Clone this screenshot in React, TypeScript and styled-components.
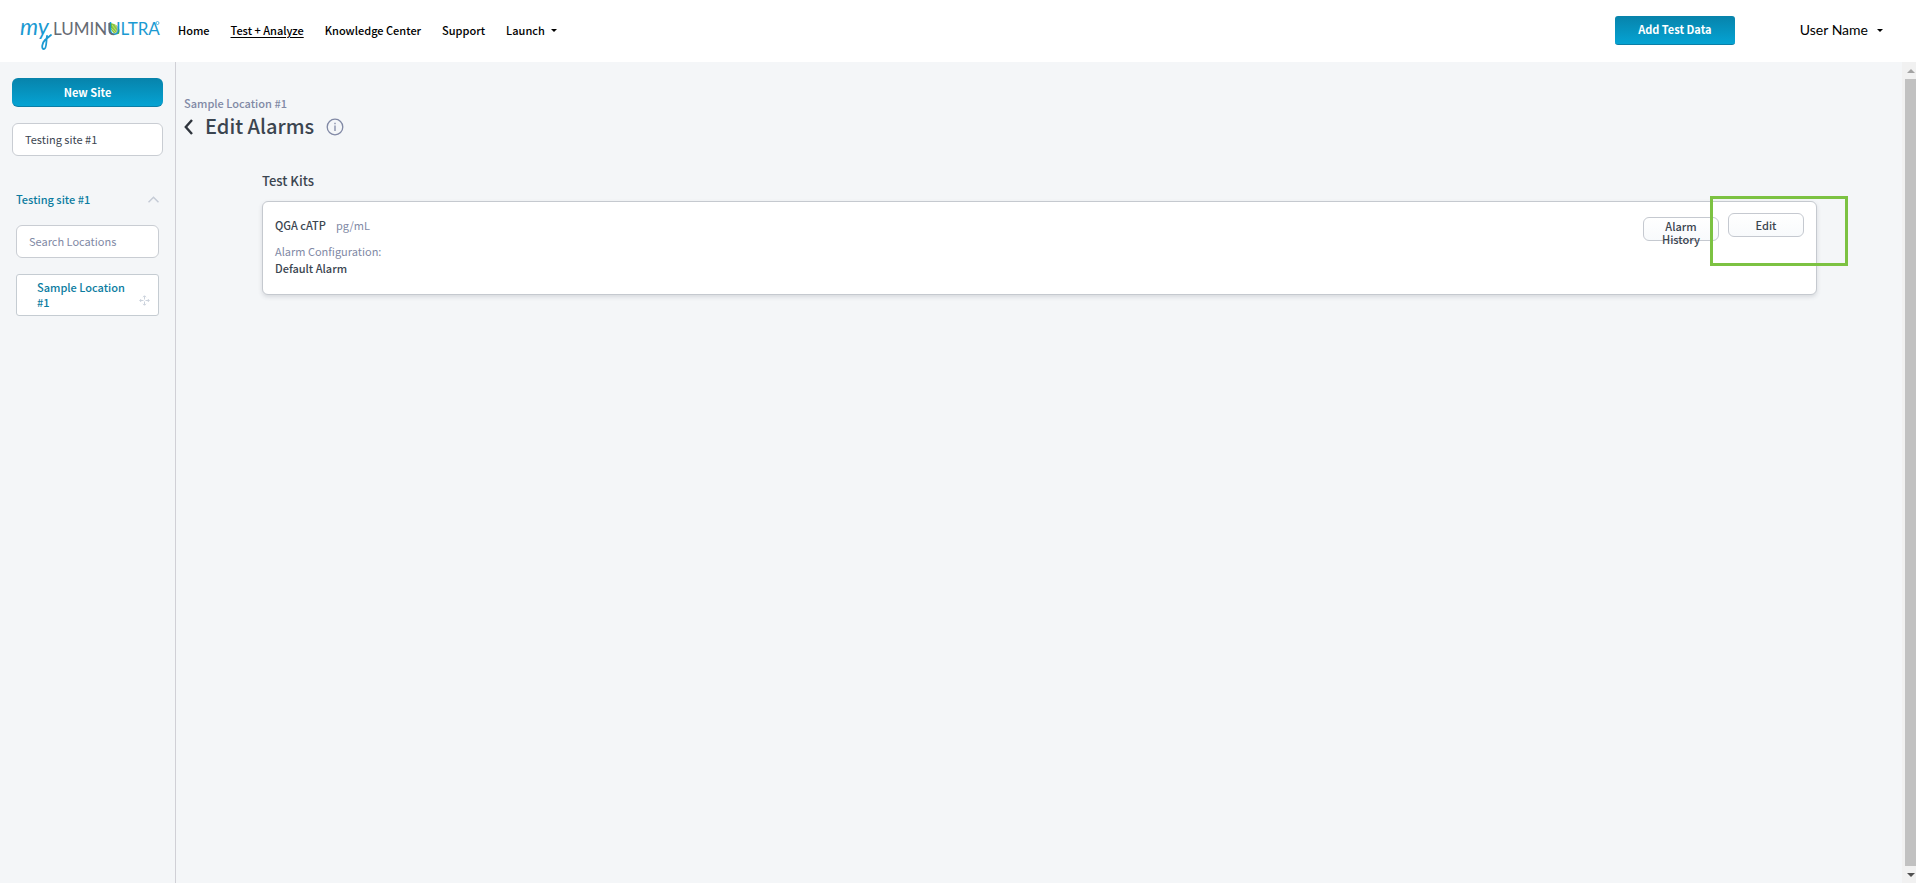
import React from "react";
import styled, { createGlobalStyle, css } from "styled-components";

const GlobalStyle = createGlobalStyle`
  *, *::before, *::after { box-sizing: border-box; }
  body {
    margin: 0;
    background: #f4f6f8;
    color: #3b4550;
    font-family: "Noto Sans CJK SC", "Noto Sans", sans-serif;
    font-size: 11px;
    font-weight: 500;
    line-height: 16px;
  }
  button, input, select { font: inherit; color: inherit; }
  button { cursor: pointer; }
`;

const Page = styled.div`
  min-height: 100vh;
  display: flex;
  flex-direction: column;
`;

const TopBar = styled.header`
  height: 62px;
  padding: 0 33px 0 18px;
  display: flex;
  align-items: center;
  background: #fff;
`;

const Logo = styled.svg`
  display: block;
  flex: none;
`;

const Nav = styled.nav`
  margin-left: 17px;
  padding-bottom: 2px;
  display: flex;
  gap: 21px;
`;

const NavLink = styled.a<{ $active?: boolean }>`
  color: #000;
  text-decoration: ${(p) => (p.$active ? "underline" : "none")};
  text-underline-offset: 2px;
`;

const MenuButton = styled.button<{ $large?: boolean }>`
  display: flex;
  align-items: center;
  gap: ${(p) => (p.$large ? 9 : 6)}px;
  padding: 0;
  border: 0;
  background: none;
  color: #000;
  ${(p) =>
    p.$large &&
    css`
      font: 400 14px/16px Lato, sans-serif;
    `}
`;

const Caret = styled.span`
  border: 3px solid transparent;
  border-top-color: currentColor;
  border-bottom: 0;
`;

const Account = styled.div`
  margin-left: auto;
  padding-bottom: 2px;
  display: flex;
  align-items: center;
  gap: 65px;
`;

const PrimaryButton = styled.button<{ $wide?: boolean }>`
  width: ${(p) => (p.$wide ? "100%" : "120px")};
  height: 29px;
  padding: 0 0 ${(p) => (p.$wide ? 0 : 2)}px;
  border: 0;
  border-bottom: 1px solid #0b7ea6;
  border-radius: ${(p) => (p.$wide ? 6 : 3)}px;
  background: linear-gradient(#0783ab, #05a3d3);
  color: #fff;
  font-weight: 700;
`;

const Body = styled.div`
  flex: 1;
  display: flex;
`;

const Sidebar = styled.aside`
  width: 176px;
  flex: none;
  padding: 16px 12px;
  border-right: 1px solid #d0d0d6;
`;

const Field = styled.input`
  display: block;
  width: 100%;
  height: 33px;
  padding: 0 12px 1px;
  border: 1px solid #c9cdd3;
  border-radius: 6px;
  background: #fff;
  font-weight: 400;
  &::placeholder { color: #8189a5; opacity: 1; }
`;

const SiteField = styled(Field)`
  margin-top: 16px;
`;

const SiteGroup = styled.section`
  margin-top: 34px;
  padding: 0 4px;
  display: grid;
  gap: 16px;
`;

const SiteToggle = styled.button`
  display: flex;
  align-items: center;
  justify-content: space-between;
  padding: 0 0 1px;
  border: 0;
  background: none;
  color: #0c7c9f;
  line-height: 18px;
`;

const LocationCard = styled.a`
  display: flex;
  align-items: flex-end;
  justify-content: space-between;
  padding: 5px 8px 5px 20px;
  border: 1px solid #c5ccd2;
  border-radius: 3px;
  background: #fff;
  color: #0c7c9f;
  line-height: 15px;
  text-decoration: none;
`;

const LocationName = styled.span`
  width: 92px;
`;

const Main = styled.main`
  flex: 1;
  min-width: 0;
  padding: 33px 85px 34px 8px;
`;

const Crumb = styled.div`
  margin-bottom: 1px;
  color: #8189a5;
`;

const TitleRow = styled.div`
  display: flex;
  align-items: center;
  height: 28px;
`;

const IconButton = styled.button`
  display: flex;
  padding: 0;
  border: 0;
  background: none;
`;

const Title = styled.h1`
  margin: 0 12px;
  font-size: 20px;
  font-weight: 500;
  line-height: 28px;
`;

const Kits = styled.section`
  margin: 31px 0 0 78px;
`;

const KitsHeading = styled.h2`
  margin: 0 0 10px;
  font-size: 13px;
  font-weight: 500;
  line-height: 20px;
`;

const KitCard = styled.article`
  display: flex;
  justify-content: space-between;
  height: 94px;
  padding: 11px 12px;
  border: 1px solid #c5c9cf;
  border-radius: 6px;
  background: #fff;
  box-shadow: 0 2px 4px rgba(60, 70, 90, 0.16);
`;

const KitInfo = styled.div`
  padding-top: 4px;
  line-height: 17px;
`;

const KitName = styled.div`
  margin-bottom: 9px;
`;

const Muted = styled.span`
  color: #8189a5;
  font-weight: 400;
`;

const Unit = styled(Muted)`
  margin-left: 10px;
`;

const Actions = styled.div`
  position: relative;
  display: flex;
  align-items: flex-start;
  gap: 9px;
`;

const ActionButton = styled.button<{ $lowered?: boolean }>`
  width: 76px;
  height: 24px;
  margin-top: ${(p) => (p.$lowered ? 4 : 0)}px;
  padding: ${(p) => (p.$lowered ? 2 : 1)}px 16px;
  border: 1px solid #c5c9d0;
  border-radius: 6px;
  background: linear-gradient(#fff, #f8fafc);
  line-height: ${(p) => (p.$lowered ? 13 : 20)}px;
  display: flex;
  justify-content: center;
`;

const Highlight = styled.div`
  position: absolute;
  top: -17px;
  right: -44px;
  width: 138px;
  height: 70px;
  border: 3px solid #7cc242;
  pointer-events: none;
`;

const ScrollTrack = styled.div`
  flex: none;
  width: 14px;
  padding-left: 3px;
  display: flex;
  flex-direction: column;
  align-items: stretch;
  background: #f1f1f1;
`;

const ScrollArrow = styled.span<{ $down?: boolean }>`
  height: 17px;
  display: flex;
  align-items: center;
  justify-content: center;
  &::before {
    content: "";
    border: 4px solid transparent;
    ${(p) =>
      p.$down
        ? "border-top-color: #505050; border-bottom: 0;"
        : "border-bottom-color: #a3a3a3; border-top: 0;"}
  }
`;

const ScrollThumb = styled.span`
  flex: 1;
  background: #c1c1c1;
`;

function BrandLogo() {
  return (
    <Logo width="143" height="48" viewBox="0 0 143 48" role="img" aria-label="myLuminUltra">
      <text x="2" y="28" fontFamily="Lato" fontStyle="italic" fontWeight="400" fontSize="23" fill="#1b9ad2">my</text>
      <path d="M29 29c-1 5 0 13-3 13s-2-6 1-9l6-5" fill="none" stroke="#1b9ad2" strokeWidth="1.8" strokeLinecap="round" />
      <text x="35" y="28" fontFamily="Lato" fontWeight="400" fontSize="17" fill="#666b73">LUMIN</text>
      <path d="M92 16c7 1 11 5 9 11-5 1-9-3-9-11z" fill="#8dc63f" />
      <path d="M94 18l6 8M93 21l6 6M97 18l4 5" stroke="#d5eaa8" strokeWidth=".6" />
      <text x="90" y="28" fontFamily="Lato" fontWeight="400" fontSize="17" fill="#1b9ad2">ULTRA</text>
      <path d="M91.200 16v6.500c0 3 2 5 5 5" fill="none" stroke="#666b73" strokeWidth="1.700" />
      <circle cx="139.500" cy="16" r="1.500" fill="none" stroke="#1b9ad2" strokeWidth=".7" />
    </Logo>
  );
}

function InfoIcon() {
  return (
    <svg width="18" height="20" viewBox="0 0 18 20" fill="none" stroke="#8189a5" strokeWidth="1.3">
      <circle cx="9" cy="11" r="7.800" />
      <path d="M9 9.500v5.500M9 6.800v1.500" />
    </svg>
  );
}

function MoveIcon() {
  return (
    <svg width="11" height="20" viewBox="0 0 11 20" fill="none" stroke="#ccd3dd" strokeWidth="1">
      <path d="M5.500 6v3.500M5.500 11.500V15M1 10.500h3.500M6.500 10.500H10" />
      <path d="M4 7.200 5.500 5.700 7 7.200M4 13.800l1.500 1.500L7 13.800M2.200 9 .7 10.500 2.200 12M8.800 9l1.500 1.500L8.800 12" />
    </svg>
  );
}

export default function App() {
  return (
    <Page>
      <GlobalStyle />
      <TopBar>
        <BrandLogo />
        <Nav aria-label="Main">
          <NavLink href="#home">Home</NavLink>
          <NavLink href="#test" $active aria-current="page">Test + Analyze</NavLink>
          <NavLink href="#knowledge">Knowledge Center</NavLink>
          <NavLink href="#support">Support</NavLink>
          <MenuButton>Launch <Caret /></MenuButton>
        </Nav>
        <Account>
          <PrimaryButton>Add Test Data</PrimaryButton>
          <MenuButton $large>User Name <Caret /></MenuButton>
        </Account>
      </TopBar>
      <Body>
        <Sidebar>
          <PrimaryButton $wide>New Site</PrimaryButton>
          <SiteField aria-label="Site" defaultValue="Testing site #1" />
          <SiteGroup>
            <SiteToggle aria-expanded="true">
              Testing site #1
              <svg width="11" height="7" viewBox="0 0 11 7" fill="none" stroke="#c5cbd6" strokeWidth="1.5">
                <path d="M.5 6.200 5.500 1.200l5 5" />
              </svg>
            </SiteToggle>
            <Field aria-label="Search Locations" placeholder="Search Locations" />
            <LocationCard href="#location">
              <LocationName>Sample Location #1</LocationName>
              <MoveIcon />
            </LocationCard>
          </SiteGroup>
        </Sidebar>
        <Main>
          <Crumb>Sample Location #1</Crumb>
          <TitleRow>
            <IconButton aria-label="Back">
              <svg width="9" height="18" viewBox="0 0 9 18" fill="none" stroke="#2f353d" strokeWidth="2.400">
                <path d="M8 3 1.800 10 8 17" />
              </svg>
            </IconButton>
            <Title>Edit Alarms</Title>
            <IconButton aria-label="About alarms">
              <InfoIcon />
            </IconButton>
          </TitleRow>
          <Kits>
            <KitsHeading>Test Kits</KitsHeading>
            <KitCard>
              <KitInfo>
                <KitName>QGA cATP<Unit>pg/mL</Unit></KitName>
                <div><Muted>Alarm Configuration:</Muted></div>
                <div>Default Alarm</div>
              </KitInfo>
              <Actions>
                <ActionButton $lowered>Alarm History</ActionButton>
                <ActionButton>Edit</ActionButton>
                <Highlight />
              </Actions>
            </KitCard>
          </Kits>
        </Main>
        <ScrollTrack aria-hidden="true">
          <ScrollArrow />
          <ScrollThumb />
          <ScrollArrow $down />
        </ScrollTrack>
      </Body>
    </Page>
  );
}
